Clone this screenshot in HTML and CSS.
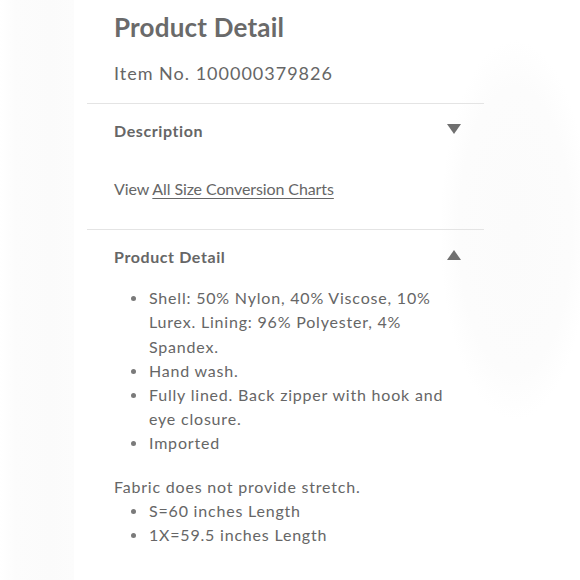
FILE: index.html
```html
<!DOCTYPE html>
<html lang="en">
<head>
<meta charset="utf-8">
<title>Product Detail</title>
<link rel="stylesheet" href="styles.css">
</head>
<body>
<div class="page">
  <div class="panel">
    <header class="intro">
      <h1 class="title">Product Detail</h1>
      <p class="item-no">Item No. 100000379826</p>
    </header>

    <section class="acc">
      <div class="acc-head">
        <h2 class="acc-title">Description</h2>
        <span class="tri tri-down"></span>
      </div>
      <div class="acc-body desc-body">
        <p class="line view">View <a href="#" class="link">All Size Conversion Charts</a></p>
      </div>
    </section>

    <section class="acc">
      <div class="acc-head">
        <h2 class="acc-title">Product Detail</h2>
        <span class="tri tri-up"></span>
      </div>
      <div class="acc-body detail-body">
        <ul class="list">
          <li>Shell: 50% Nylon, 40% Viscose, 10% Lurex. Lining: 96% Polyester, 4% Spandex.</li>
          <li>Hand wash.</li>
          <li>Fully lined. Back zipper with hook and eye closure.</li>
          <li>Imported</li>
        </ul>
        <p class="line note">Fabric does not provide stretch.</p>
        <ul class="list">
          <li>S=60 inches Length</li>
          <li>1X=59.5 inches Length</li>
        </ul>
      </div>
    </section>
  </div>
</div>
</body>
</html>
```
FILE: styles.css
```css
* { box-sizing: border-box; }
html, body { margin: 0; padding: 0; }
body {
  width: 580px;
  height: 580px;
  overflow: hidden;
  font-family: "Lato", "Liberation Sans", sans-serif;
  color: #666;
  background:
    radial-gradient(ellipse 75px 190px at 515px 230px, #fbfbfb 0%, #fcfcfc 75%, rgba(255,255,255,0) 100%),
    linear-gradient(90deg, #ffffff 0px, #fcfcfc 15px, #fbfbfb 50px, #fcfcfc 74px, #ffffff 74px);
}
.page {
  padding-left: 87px;
}
.panel {
  width: 397px;
}
.intro {
  padding: 10px 0 18px 27px;
}
.title {
  margin: 0;
  font-size: 26px;
  line-height: 34px;
  font-weight: 700;
  color: #6a6a6a;
  letter-spacing: 0.2px;
}
.item-no {
  margin: 17px 0 0;
  font-size: 18px;
  line-height: 24px;
  letter-spacing: 1px;
}
.acc {
  border-top: 1px solid #e4e4e4;
}
.acc-head {
  display: flex;
  align-items: center;
  justify-content: space-between;
  padding: 15px 23px 0 27px;
}
.acc-title {
  margin: 0;
  font-size: 16px;
  line-height: 24px;
  font-weight: 700;
  color: #666;
  letter-spacing: 0.6px;
}
.tri {
  width: 0;
  height: 0;
  border-left: 7px solid transparent;
  border-right: 7px solid transparent;
}
.tri-down { border-top: 10px solid #707070; margin-top: -4px; }
.tri-up { border-bottom: 10px solid #707070; margin-top: -4px; }
.acc-body {
  padding-left: 27px;
  padding-right: 40px;
  font-size: 16px;
  line-height: 24.2px;
  letter-spacing: 0.8px;
}
.desc-body { padding-top: 34px; padding-bottom: 28px; }
.detail-body { padding-top: 17px; padding-bottom: 20px; }
.line { margin: 0; }
.view { letter-spacing: -0.1px; }
.link { color: #666; text-decoration: underline; text-underline-offset: 3px; }
.list {
  margin: 0;
  padding-left: 17px;
  list-style: none;
}
.list li {
  display: flex;
}
.list li::before {
  content: "";
  flex: none;
  width: 5px;
  height: 5px;
  border-radius: 50%;
  background: #7a7a7a;
  margin: 10px 13px 0 0;
}
.note { margin-top: 19px; }
```
